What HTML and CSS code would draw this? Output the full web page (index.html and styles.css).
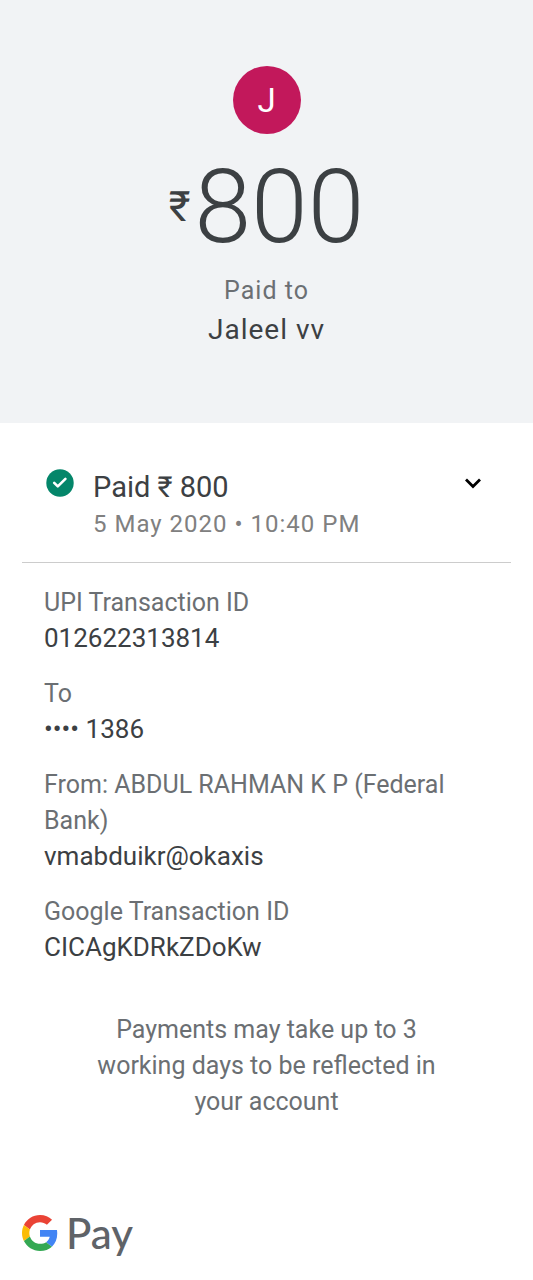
FILE: index.html
```html
<!DOCTYPE html>
<html lang="en">
<head>
<meta charset="utf-8">
<meta name="viewport" content="width=device-width, initial-scale=1">
<title>Payment details</title>
<link rel="stylesheet" href="styles.css">
</head>
<body>
<header class="hero">
  <div class="avatar">J</div>
  <h1 class="amount"><span class="currency">₹</span><span class="value">800</span></h1>
  <p class="label">Paid to</p>
  <p class="payee">Jaleel vv</p>
</header>
<main class="content">
  <section class="status">
    <svg class="check" viewBox="0 0 28 28" aria-hidden="true"><circle cx="14" cy="14" r="13.7" fill="#04866a"/><path d="M8.2 13.8l3.6 3.6 7.6-7.6" fill="none" stroke="#fff" stroke-width="2.6" stroke-linecap="round" stroke-linejoin="round"/></svg>
    <div class="summary">
      <h2 class="title">Paid ₹ 800</h2>
      <p class="time">5 May 2020 • 10:40 PM</p>
    </div>
    <button class="toggle" type="button" aria-label="Toggle details" aria-expanded="true"><svg class="chevron" viewBox="0 0 18 12" aria-hidden="true"><path d="M2 2.5l7 7 7-7" fill="none" stroke="#000" stroke-width="2.8"/></svg></button>
  </section>
  <dl class="details">
    <div class="entry"><dt>UPI Transaction ID</dt><dd>012622313814</dd></div>
    <div class="entry"><dt>To</dt><dd>•••• 1386</dd></div>
    <div class="entry"><dt>From: ABDUL RAHMAN K P (Federal Bank)</dt><dd>vmabduikr@okaxis</dd></div>
    <div class="entry"><dt>Google Transaction ID</dt><dd>CICAgKDRkZDoKw</dd></div>
  </dl>
  <p class="note">Payments may take up to 3 working days to be reflected in your account</p>
</main>
<footer class="brand">
  <svg class="logo" viewBox="0 0 48 48" role="img" aria-label="Google"><path fill="#EA4335" d="M24 9.5c3.54 0 6.71 1.22 9.21 3.6l6.85-6.85C35.9 2.38 30.47 0 24 0 14.62 0 6.51 5.38 2.56 13.22l7.98 6.19C12.43 13.72 17.74 9.5 24 9.5z"/><path fill="#4285F4" d="M46.98 24.55c0-1.57-.15-3.09-.38-4.55H24v9.02h12.94c-.58 2.96-2.26 5.48-4.78 7.18l7.73 6c4.51-4.18 7.09-10.36 7.09-17.65z"/><path fill="#FBBC05" d="M10.53 28.59c-.48-1.45-.76-2.99-.76-4.59s.27-3.14.76-4.59l-7.98-6.19C.92 16.46 0 20.12 0 24c0 3.88.92 7.54 2.56 10.78l7.97-6.19z"/><path fill="#34A853" d="M24 48c6.48 0 11.93-2.13 15.89-5.81l-7.73-6c-2.15 1.45-4.92 2.3-8.16 2.3-6.26 0-11.57-4.22-13.47-9.91l-7.98 6.19C6.51 42.62 14.62 48 24 48z"/></svg>
  <span class="wordmark">Pay</span>
</footer>
</body>
</html>
```
FILE: styles.css
```css
* { box-sizing: border-box; }
body, h1, h2, p, dl, dd { margin: 0; font-weight: 400; }
body {
  min-height: 100vh;
  display: flex;
  flex-direction: column;
  background: #fff;
  color: #3c4043;
  font-family: Roboto, "Noto Sans", sans-serif;
}
.hero {
  display: flex;
  flex-direction: column;
  align-items: center;
  padding: 66px 24px 74px;
  background: #f1f3f5;
}
.avatar {
  width: 68px;
  height: 68px;
  border-radius: 50%;
  background: #c2185b;
  color: #fff;
  font-size: 33px;
  line-height: 70px;
  text-align: center;
}
.amount {
  display: flex;
  align-items: center;
  gap: 4px;
  height: 104px;
  margin-top: 21px;
}
.currency { font-size: 42px; line-height: 48px; }
.value { font-size: 102px; line-height: 104px; font-weight: 300; }
.label {
  margin-top: 12px;
  color: #6b6f73;
  font-size: 25px;
  line-height: 39px;
  letter-spacing: 1px;
}
.payee { font-size: 28px; line-height: 39px; letter-spacing: 1px; }
.content { padding: 40px 22px 0; }
.status {
  display: flex;
  align-items: flex-start;
  gap: 19px;
  padding: 6px 29px 19px 24px;
  border-bottom: 1px solid #ccc;
}
.check { width: 28px; height: 28px; }
.summary { flex: 1; }
.title { font-size: 29px; line-height: 37px; }
.time { color: #808080; font-size: 24px; line-height: 37px; letter-spacing: 1px; }
.toggle {
  display: flex;
  margin-top: 8px;
  padding: 0;
  border: 0;
  background: none;
}
.chevron { width: 18px; height: 12px; }
.details {
  display: flex;
  flex-direction: column;
  gap: 21px;
  padding: 22px 48px 0 22px;
}
dt { color: #6b6f73; font-size: 25px; line-height: 36px; }
dd { font-size: 26px; line-height: 34px; }
.note {
  max-width: 360px;
  margin: 48px auto 0;
  color: #6b6f73;
  font-size: 25px;
  line-height: 36px;
  text-align: center;
}
.brand {
  display: flex;
  align-items: center;
  gap: 8px;
  margin-top: auto;
  padding: 0 22px 23px;
}
.logo { width: 36px; height: 36px; }
.wordmark {
  color: #5f6368;
  font-family: Lato, Roboto, sans-serif;
  font-size: 42px;
  font-weight: 500;
  line-height: 48px;
}
```
